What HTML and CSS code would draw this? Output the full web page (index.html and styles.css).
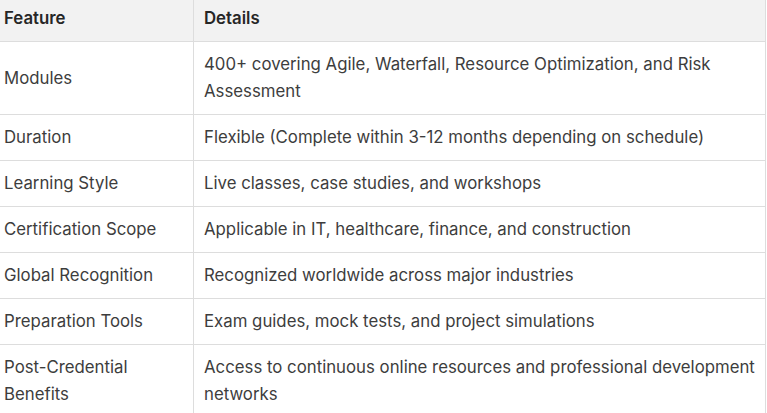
FILE: index.html
```html
<!DOCTYPE html>
<html lang="en">
<head>
<meta charset="utf-8">
<title>Features</title>
<link rel="stylesheet" href="styles.css">
</head>
<body>
<div class="wrap">
<table class="features">
  <thead>
    <tr><th class="col-feature">Feature</th><th>Details</th></tr>
  </thead>
  <tbody>
    <tr><td>Modules</td><td>400+ covering Agile, Waterfall, Resource Optimization, and Risk Assessment</td></tr>
    <tr><td>Duration</td><td>Flexible (Complete within 3-12 months depending on schedule)</td></tr>
    <tr><td>Learning Style</td><td>Live classes, case studies, and workshops</td></tr>
    <tr><td>Certification Scope</td><td>Applicable in IT, healthcare, finance, and construction</td></tr>
    <tr><td>Global Recognition</td><td>Recognized worldwide across major industries</td></tr>
    <tr><td>Preparation Tools</td><td>Exam guides, mock tests, and project simulations</td></tr>
    <tr><td>Post-Credential Benefits</td><td>Access to continuous online resources and professional development networks</td></tr>
  </tbody>
</table>
</div>
</body>
</html>
```
FILE: styles.css
```css
html, body {
  margin: 0;
  padding: 0;
  background: #ffffff;
}
.wrap {
  margin: -4px 0 0 -7px;
  width: 773px;
}
.features {
  width: 100%;
  border-collapse: collapse;
  table-layout: fixed;
  font-family: Inter, "Liberation Sans", sans-serif;
  font-size: 16.8px;
  color: #3d3d3d;
}
.features th,
.features td {
  border: 1px solid #dddddd;
  padding: 9px 6px 9px 10px;
  text-align: left;
  vertical-align: middle;
  line-height: 27px;
}
.features thead th {
  border-top: none;
  background: #f2f2f2;
  font-weight: 600;
  color: #262626;
}
.col-feature {
  width: 183px;
}
.features td {
  font-weight: 400;
}
```
